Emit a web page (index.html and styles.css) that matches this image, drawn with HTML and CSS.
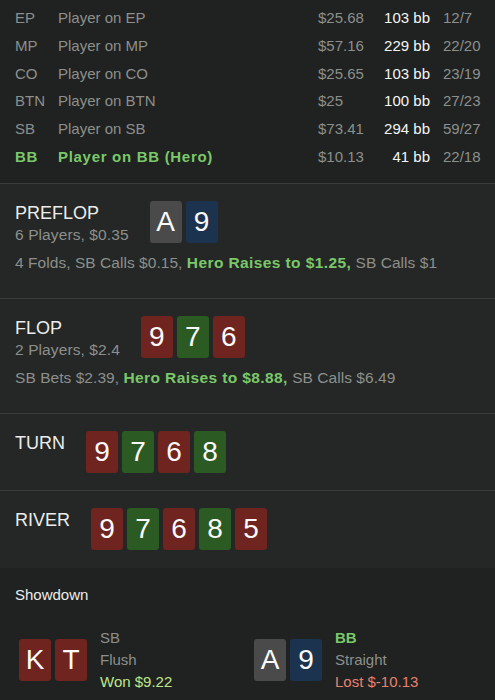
FILE: index.html
```html
<!DOCTYPE html>
<html>

<head>
    <meta charset="utf-8">
    <meta name='viewport' content='width=device-width initial-scale=1'>
    <title>hand replay</title>
    <link rel="stylesheet" href="styles.css">
</head>

<body>
    <section class="players">
        <div class="player">
            <span class="pos">EP</span><span class="name">Player on EP</span>
            <span class="money">$25.68</span><span class="bb">103 bb</span><span class="hands">12/7</span>
        </div>
        <div class="player">
            <span class="pos">MP</span><span class="name">Player on MP</span>
            <span class="money">$57.16</span><span class="bb">229 bb</span><span class="hands">22/20</span>
        </div>
        <div class="player">
            <span class="pos">CO</span><span class="name">Player on CO</span>
            <span class="money">$25.65</span><span class="bb">103 bb</span><span class="hands">23/19</span>
        </div>
        <div class="player">
            <span class="pos">BTN</span><span class="name">Player on BTN</span>
            <span class="money">$25</span><span class="bb">100 bb</span><span class="hands">27/23</span>
        </div>
        <div class="player">
            <span class="pos">SB</span><span class="name">Player on SB</span>
            <span class="money">$73.41</span><span class="bb">294 bb</span><span class="hands">59/27</span>
        </div>
        <div class="player hero">
            <span class="pos">BB</span><span class="name">Player on BB (Hero)</span>
            <span class="money">$10.13</span><span class="bb">41 bb</span><span class="hands">22/18</span>
        </div>
    </section>

    <section class="street">
        <div class="street_head">
            <div class="street_title">
                <h3>PREFLOP</h3>
                <p class="sub">6 Players, $0.35</p>
            </div>
            <div class="cards">
                <span class="card gray">A</span><span class="card blue">9</span>
            </div>
        </div>
        <p class="actions">4 Folds, SB Calls $0.15, <b>Hero Raises to $1.25,</b> SB Calls $1</p>
    </section>

    <section class="street">
        <div class="street_head">
            <div class="street_title">
                <h3>FLOP</h3>
                <p class="sub">2 Players, $2.4</p>
            </div>
            <div class="cards">
                <span class="card red">9</span><span class="card green">7</span><span class="card red">6</span>
            </div>
        </div>
        <p class="actions">SB Bets $2.39, <b>Hero Raises to $8.88,</b> SB Calls $6.49</p>
    </section>

    <section class="street">
        <div class="street_head">
            <div class="street_title">
                <h3>TURN</h3>
            </div>
            <div class="cards">
                <span class="card red">9</span><span class="card green">7</span><span class="card red">6</span><span class="card green">8</span>
            </div>
        </div>
    </section>

    <section class="street">
        <div class="street_head">
            <div class="street_title">
                <h3>RIVER</h3>
            </div>
            <div class="cards">
                <span class="card red">9</span><span class="card green">7</span><span class="card red">6</span><span class="card green">8</span><span class="card red">5</span>
            </div>
        </div>
    </section>

    <section class="showdown">
        <h4>Showdown</h4>
        <div class="results">
            <div class="result">
                <div class="cards">
                    <span class="card red">K</span><span class="card red">T</span>
                </div>
                <div class="result_info">
                    <p class="who">SB</p>
                    <p class="hand">Flush</p>
                    <p class="won">Won $9.22</p>
                </div>
            </div>
            <div class="result">
                <div class="cards">
                    <span class="card gray">A</span><span class="card blue">9</span>
                </div>
                <div class="result_info">
                    <p class="who hero_name">BB</p>
                    <p class="hand">Straight</p>
                    <p class="lost">Lost $-10.13</p>
                </div>
            </div>
        </div>
    </section>
</body>

</html>
```

FILE: styles.css
```css
html {
    background-color: rgb(31, 34, 32);
}

body {
    margin: 0;
    font-family: "Liberation Sans", Arial, sans-serif;
    font-size: 15px;
    color: rgb(141, 143, 141);
}

p, h3, h4 {
    margin: 0;
}

section.players {
    padding: 4px 12px 12px 15px;
}

div.player {
    display: grid;
    grid-template-columns: 43px 1fr 64px 48px 53px;
    line-height: 27.8px;
    white-space: nowrap;
}

span.bb {
    text-align: right;
    color: rgb(245, 245, 245);
}

span.hands {
    padding-left: 13px;
}

div.hero span.pos,
div.hero span.name {
    color: rgb(122, 200, 106);
    font-weight: bold;
    letter-spacing: 0.7px;
}

section.street {
    padding: 17px 15px;
    background-color: rgb(36, 39, 37);
    border-top: 1px solid rgb(58, 61, 59);
}

div.street_head {
    display: flex;
    align-items: flex-start;
    gap: 21px;
}

div.street_title h3 {
    font-size: 18px;
    font-weight: normal;
    line-height: 24px;
    color: rgb(236, 236, 236);
}

p.sub {
    font-size: 15.5px;
    line-height: 20px;
    letter-spacing: 0.1px;
}

p.actions {
    margin: 8px 0;
    font-size: 15.5px;
    line-height: 20px;
    letter-spacing: 0.05px;
    white-space: nowrap;
}

p.actions b {
    color: rgb(122, 200, 106);
    letter-spacing: 0.4px;
}

div.cards {
    display: flex;
    gap: 4px;
}

span.card {
    display: flex;
    align-items: center;
    justify-content: center;
    width: 32px;
    height: 42px;
    border-radius: 3px;
    font-size: 28px;
    color: rgb(250, 250, 250);
}

span.gray {
    background-color: rgb(74, 74, 74);
}

span.blue {
    background-color: rgb(28, 51, 80);
}

span.red {
    background-color: rgb(111, 36, 32);
}

span.green {
    background-color: rgb(43, 90, 34);
}

section.showdown {
    padding: 17px 15px;
    border-top: 1px solid rgb(36, 39, 37);
}

section.showdown h4 {
    font-size: 15px;
    font-weight: normal;
    line-height: 19px;
    color: rgb(236, 236, 236);
}

div.results {
    display: grid;
    grid-template-columns: 235px 1fr;
    margin-top: 23px;
    padding-left: 4px;
}

div.result {
    display: flex;
    align-items: center;
    gap: 13px;
}

div.result_info p {
    line-height: 22px;
}

p.who.hero_name {
    color: rgb(122, 200, 106);
    font-weight: bold;
}

p.won {
    color: rgb(190, 230, 140);
}

p.lost {
    color: rgb(232, 128, 111);
}
```
